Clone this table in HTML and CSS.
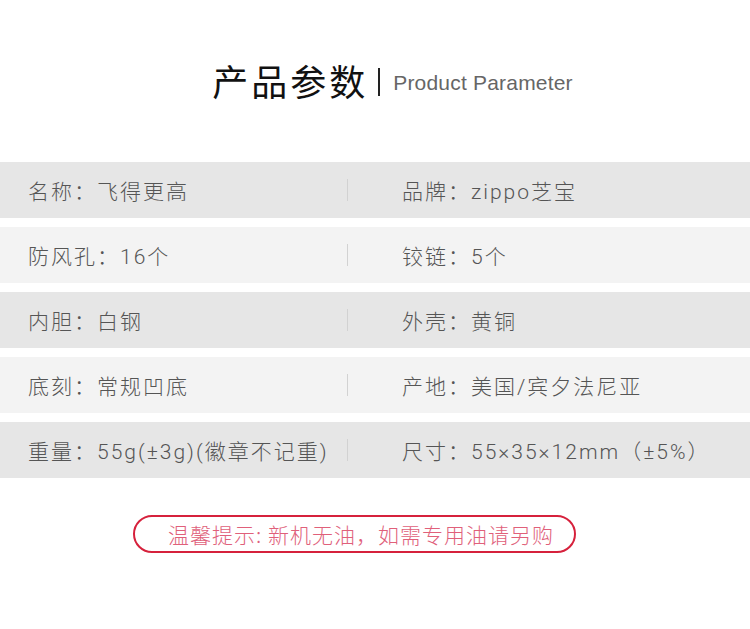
FILE: index.html
```html
<!DOCTYPE html>
<html lang="zh">
<head>
<meta charset="utf-8">
<title>产品参数</title>
<link rel="stylesheet" href="styles.css">
</head>
<body>
<div class="page">
  <header class="head">
    <h1 class="title">产品参数</h1>
    <span class="bar"></span>
    <span class="sub">Product Parameter</span>
  </header>
  <section class="params">
    <div class="row">
      <div class="cell left">名称：飞得更高</div>
      <span class="div"></span>
      <div class="cell right">品牌：zippo芝宝</div>
    </div>
    <div class="row light">
      <div class="cell left">防风孔：16个</div>
      <span class="div"></span>
      <div class="cell right">铰链：5个</div>
    </div>
    <div class="row">
      <div class="cell left">内胆：白钢</div>
      <span class="div"></span>
      <div class="cell right">外壳：黄铜</div>
    </div>
    <div class="row light">
      <div class="cell left">底刻：常规凹底</div>
      <span class="div"></span>
      <div class="cell right">产地：美国/宾夕法尼亚</div>
    </div>
    <div class="row">
      <div class="cell left">重量：55g(±3g)(徽章不记重)</div>
      <span class="div"></span>
      <div class="cell right">尺寸：55×35×12mm（±5%）</div>
    </div>
  </section>
  <div class="tip-wrap">
    <div class="tip">温馨提示: 新机无油，如需专用油请另购</div>
  </div>
</div>
</body>
</html>
```
FILE: styles.css
```css
* { box-sizing: border-box; }
html, body { margin: 0; padding: 0; background: #fff; }
body {
  width: 750px;
  font-family: "Noto Sans CJK SC Light", "Noto Sans CJK SC", "Liberation Sans", sans-serif;
}
.page { width: 750px; }
.head {
  display: flex;
  align-items: center;
  justify-content: center;
  height: 162px;
  padding-bottom: 3px;
  padding-left: 35px;
}
.title {
  margin: 0;
  font-family: "Noto Sans CJK SC", sans-serif;
  font-size: 36px;
  font-weight: 400;
  letter-spacing: 3px;
  color: #111;
  line-height: 44px;
}
.bar {
  width: 2px;
  height: 28px;
  background: #222;
  margin: 4px 13px 0 10px;
}
.sub {
  font-family: "Liberation Sans", Arial, sans-serif;
  font-size: 21px;
  letter-spacing: 0.2px;
  color: #666;
  margin-top: 6px;
}
.params {
  display: flex;
  flex-direction: column;
  gap: 9px;
}
.row {
  display: flex;
  align-items: center;
  height: 56px;
  background: #e6e6e6;
  color: #555;
  font-family: Roboto, "Noto Sans CJK SC Light", "Noto Sans CJK SC", sans-serif;
  font-size: 21px;
  font-weight: 300;
  letter-spacing: 2px;
  padding-bottom: 1px;
}
.row.light { background: #f3f3f3; }
.cell { white-space: nowrap; }
.left { width: 347px; padding-left: 28px; }
.div { width: 1px; height: 22px; background: #d2d2d2; }
.right { padding-left: 54px; }
.tip-wrap {
  display: flex;
  justify-content: center;
  padding-top: 37px;
}
.tip {
  width: 443px;
  height: 38px;
  margin-right: 41px;
  border: 2px solid #d6213c;
  border-radius: 20px;
  color: #e0607a;
  font-size: 21px;
  font-weight: 300;
  display: flex;
  align-items: center;
  padding-left: 33px;
  letter-spacing: 1px;
  white-space: nowrap;
}
```
